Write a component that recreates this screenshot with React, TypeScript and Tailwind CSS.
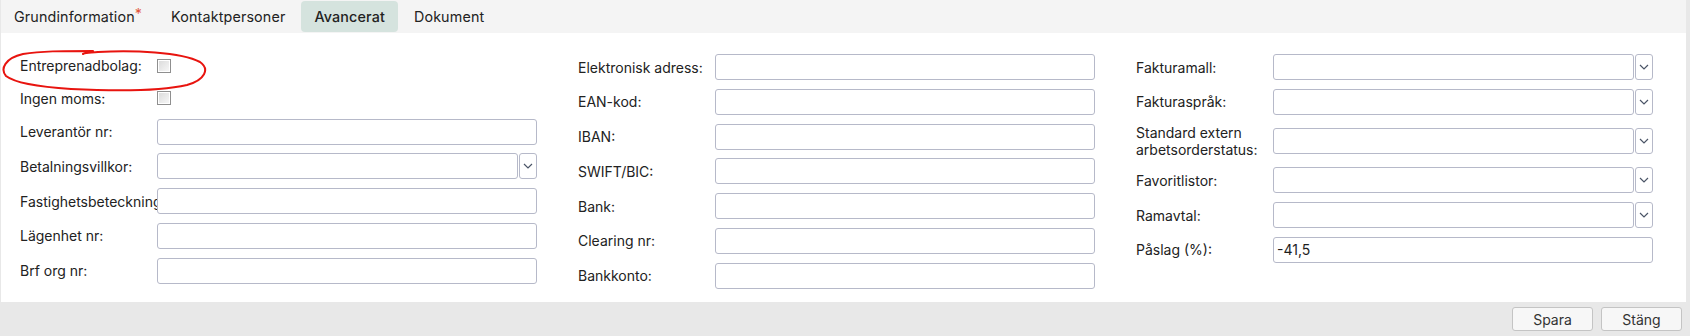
import React from "react"

type Field = {
  label: string
  kind: "text" | "select" | "check"
  value?: string
  tall?: boolean
}

const COLUMNS: Field[][] = [
  [
    { label: "Entreprenadbolag:", kind: "check" },
    { label: "Ingen moms:", kind: "check" },
    { label: "Leverantör nr:", kind: "text" },
    { label: "Betalningsvillkor:", kind: "select" },
    { label: "Fastighetsbeteckning:", kind: "text" },
    { label: "Lägenhet nr:", kind: "text" },
    { label: "Brf org nr:", kind: "text" },
  ],
  [
    { label: "Elektronisk adress:", kind: "text" },
    { label: "EAN-kod:", kind: "text" },
    { label: "IBAN:", kind: "text" },
    { label: "SWIFT/BIC:", kind: "text" },
    { label: "Bank:", kind: "text" },
    { label: "Clearing nr:", kind: "text" },
    { label: "Bankkonto:", kind: "text" },
  ],
  [
    { label: "Fakturamall:", kind: "select" },
    { label: "Fakturaspråk:", kind: "select" },
    { label: "Standard extern arbetsorderstatus:", kind: "select", tall: true },
    { label: "Favoritlistor:", kind: "select" },
    { label: "Ramavtal:", kind: "select" },
    { label: "Påslag (%):", kind: "text", value: "-41,5" },
  ],
]

const TABS = ["Grundinformation", "Kontaktpersoner", "Avancerat", "Dokument"]

function Checkbox() {
  return (
    <span className="block w-[14px] h-[14px] border border-[#8f8f8f] bg-white p-[1px]">
      <span className="block w-full h-full bg-gradient-to-br from-[#dcdcdc] to-[#f6f6f6]" />
    </span>
  )
}

function Chevron() {
  return (
    <svg width="10" height="6" viewBox="0 0 10 6" fill="none">
      <path d="M1 1L5 5L9 1" stroke="#4b5567" strokeWidth="1.2" />
    </svg>
  )
}

function FieldRow({ field }: { field: Field }) {
  if (field.kind === "check") {
    return (
      <div className="flex items-center h-[23.5px]">
        <div className="w-[137px] shrink-0 whitespace-nowrap overflow-hidden">{field.label}</div>
        <Checkbox />
      </div>
    )
  }
  return (
    <div className={"flex items-center " + (field.tall ? "h-[35px]" : "h-[26px]")}>
      <div
        className={
          "w-[137px] shrink-0 overflow-hidden " +
          (field.tall ? "leading-[17px]" : "whitespace-nowrap")
        }
      >
        {field.label}
      </div>
      {field.kind === "select" ? (
        <div className="flex w-[380px] h-[26px] gap-[1px]">
          <div className="flex-1 border border-[#b6b9c9] rounded-[3px] bg-white" />
          <div className="w-[18px] flex items-center justify-center border border-[#b6b9c9] rounded-[3px] bg-white">
            <Chevron />
          </div>
        </div>
      ) : (
        <div className="w-[380px] h-[26px] border border-[#b6b9c9] rounded-[3px] bg-white flex items-center px-[3px] text-[#1e1e1e]">
          {field.value}
        </div>
      )}
    </div>
  )
}

export default function App() {
  return (
    <div className="w-[1690px] h-[336px] flex flex-col bg-[#e8e8e8] text-[14px] text-[#222] font-['Inter','Noto_Sans',sans-serif]">
      <div className="flex-1 ml-[1px] mr-[4px] bg-white flex flex-col">
        <div className="h-[33px] bg-[#f4f4f4] flex items-stretch gap-[3px] pt-[1px] pb-[1px] text-[14.3px] tracking-[0.15px]">
          {TABS.map((tab) => (
            <div
              key={tab}
              className={
                "px-[13px] flex items-center rounded-[4px] " +
                (tab === "Avancerat" ? "bg-[#d5e3de] font-medium" : "")
              }
            >
              {tab}
              {tab === "Grundinformation" && (
                <span className="text-[#e2563f] relative -top-[3px]">*</span>
              )}
            </div>
          ))}
        </div>

        <div className="relative pt-[21px] pl-[19px] grid grid-cols-[517px_517px_517px] gap-x-[41px] items-start">
          {COLUMNS.map((col, i) => (
            <div key={i} className="flex flex-col gap-[8.8px]">
              {col.map((f) => (
                <FieldRow key={f.label} field={f} />
              ))}
            </div>
          ))}

          <svg
            className="absolute left-0 top-[14px] pointer-events-none"
            width="210"
            height="48"
            viewBox="0 0 210 48"
            fill="none"
          >
            <path
              d="M82 7 C86 5, 91 6, 97 5 C132 3, 180 5, 199 15 C209 22, 204 33, 186 38 C160 44, 110 44, 70 42 C40 40, 14 36, 5 29 C-1 22, 4 11, 22 7 C40 4, 60 4, 92 4"
              stroke="#e8140f"
              strokeWidth="2"
              strokeLinecap="round"
            />
          </svg>
        </div>
      </div>

      <div className="h-[34px] flex items-center justify-end gap-[8px] pr-[8px]">
        <button className="w-[81px] h-[24px] bg-[#f7f7f7] border border-[#c4c4c4] rounded-[3px] text-[#333]">
          Spara
        </button>
        <button className="w-[81px] h-[24px] bg-[#f7f7f7] border border-[#c4c4c4] rounded-[3px] text-[#333]">
          Stäng
        </button>
      </div>
    </div>
  )
}
